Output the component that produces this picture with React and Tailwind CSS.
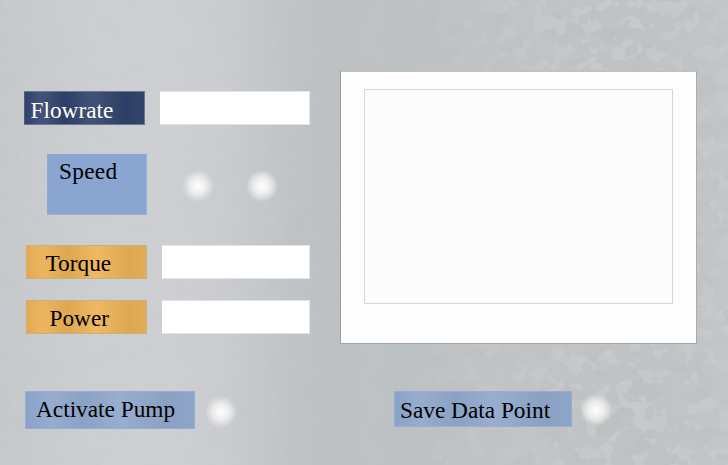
const METAL =
  "bg-[linear-gradient(90deg,#c6c9ca_0px,#c9ccce_40px,#cccfd1_90px,#cdcfd2_170px,#cacccf_225px,#c4c8cb_262px,#c0c3c6_292px,#bdc1c4_325px,#bec2c5_375px,#bcc1c4_405px,#c0c2c4_470px,#c1c3c5_540px,#c0c2c4_610px,#bfc3c5_655px,#c3c5c8_728px)]";

const SHEEN = {
  navy: "bg-[linear-gradient(90deg,#31436a_0%,#42527a_13%,#405074_18%,#2d3f66_34%,#415174_54%,#405073_60%,#2d3f65_84%,#33446a_100%)] text-white border-[#6b7793] border-l-[#4d5c80]",
  plain: "bg-[#8aa5cf] text-black border-[#9db2d2] border-t-[#8aa5cf] border-l-[#8fa9d0]",
  amber:
    "bg-[linear-gradient(90deg,#e2aa54_0%,#edb560_13%,#dda851_34%,#efb863_58%,#dea852_86%,#e2ad57_100%)] text-black border-[#c9b083] border-l-[#dcab60]",
  blue: "bg-[linear-gradient(90deg,#8aa3c9_0%,#97add0_15%,#8aa2c5_34%,#98aed1_56%,#8aa1c3_84%,#8ea5ca_100%)] text-black border-[#98add1]",
};

function Label({ tone, className, children }) {
  return (
    <div className={`box-border shrink-0 border whitespace-nowrap text-[23.3px] leading-6 ${SHEEN[tone]} ${className}`}>
      {children}
    </div>
  );
}

function Field({ className }) {
  return <div className={`shrink-0 border border-[#e3e4e6] border-l-white bg-white ${className}`} />;
}

function Lamp({ className = "" }) {
  return (
    <div
      className={`size-8 shrink-0 rounded-full bg-[radial-gradient(circle,#ffffff_0px,#f8f8f9_3px,#ebecec_8px,rgba(225,226,228,0.9)_11px,rgba(218,220,222,0.5)_14px,rgba(210,212,214,0)_16px)] ${className}`}
    />
  );
}

function Texture() {
  return (
    <svg className="absolute inset-0 -z-10" width="728" height="465" aria-hidden="true">
      <defs>
        <filter id="flakes" x="0" y="0" width="100%" height="100%" colorInterpolationFilters="sRGB">
          <feTurbulence type="fractalNoise" baseFrequency="0.06 0.065" numOctaves="3" seed="8" />
          <feColorMatrix values="0 0 0 0 0.785  0 0 0 0 0.8  0 0 0 0 0.805  16 0 0 0 -8.7" />
        </filter>
        <filter id="shade" x="0" y="0" width="100%" height="100%" colorInterpolationFilters="sRGB">
          <feTurbulence type="fractalNoise" baseFrequency="0.035 0.05" numOctaves="3" seed="21" />
          <feColorMatrix values="0 0 0 0 0.71  0 0 0 0 0.72  0 0 0 0 0.73  8 0 0 0 -4.3" />
        </filter>
        <linearGradient id="fade">
          <stop offset="0" stopColor="#fff" stopOpacity="0.3" />
          <stop offset="0.12" stopColor="#fff" stopOpacity="0.08" />
          <stop offset="0.55" stopColor="#fff" stopOpacity="0.06" />
          <stop offset="0.7" stopColor="#fff" stopOpacity="0.5" />
          <stop offset="0.82" stopColor="#fff" stopOpacity="0.9" />
          <stop offset="1" stopColor="#fff" stopOpacity="0.7" />
        </linearGradient>
        <mask id="right">
          <rect width="728" height="465" fill="url(#fade)" />
        </mask>
      </defs>
      <g mask="url(#right)">
        <rect width="728" height="465" filter="url(#shade)" opacity="0.2" />
        <rect width="728" height="465" filter="url(#flakes)" opacity="0.85" />
      </g>
    </svg>
  );
}

export default function App() {
  return (
    <main
      className={`relative isolate flex h-[465px] w-[728px] overflow-hidden font-['Liberation_Serif','Times_New_Roman',serif] ${METAL}`}
    >
      <Texture />
      <section className="flex w-[340px] shrink-0 flex-col pt-[91px]">
        <div className="flex pl-6">
          <Label tone="navy" className="h-[34px] w-[121px] pt-[6px] pl-[5.5px]">Flowrate</Label>
          <Field className="ml-[15px] h-[34px] w-[150px]" />
        </div>
        <div className="mt-[29px] flex pl-[47px]">
          <Label tone="plain" className="h-[61px] w-[100px] pt-[4px] pl-[11px] tracking-[0.3px]">Speed</Label>
          <Lamp className="mt-4 ml-[35px]" />
          <Lamp className="mt-4 ml-8" />
        </div>
        <div className="mt-[30px] flex pl-[26px]">
          <Label tone="amber" className="h-[34px] w-[121px] pt-[5px] pl-[18.5px]">Torque</Label>
          <Field className="ml-[15px] h-[34px] w-[148px]" />
        </div>
        <div className="mt-[21px] flex pl-[26px]">
          <Label tone="amber" className="h-[34px] w-[121px] pt-[5px] pl-[22.5px]">Power</Label>
          <Field className="ml-[15px] h-[34px] w-[148px]" />
        </div>
        <div className="mt-[57px] flex pl-[25px]">
          <Label tone="blue" className="h-[38px] w-[170px] pt-[5px] pl-[10px]">Activate Pump</Label>
          <Lamp className="mt-[5px] ml-[10px]" />
        </div>
      </section>
      <section className="flex flex-1 flex-col pt-[70px]">
        <div className="h-[274px] w-[357px] border border-t-2 border-t-[#c2c1bf] border-r-[#a9abad] border-b-[#a0a2a4] border-l-[#999b9d] bg-[#fdfdfd] pt-[17px] pl-[23px]">
          <div className="h-[215px] w-[309px] border border-[#d6d7d8] bg-[#fcfcfc]" />
        </div>
        <div className="mt-[47px] flex pl-[54px]">
          <Label tone="blue" className="h-[36px] w-[178px] pt-[6px] pl-[5px]">Save Data Point</Label>
          <Lamp className="mt-[3px] ml-2" />
        </div>
      </section>
    </main>
  );
}
